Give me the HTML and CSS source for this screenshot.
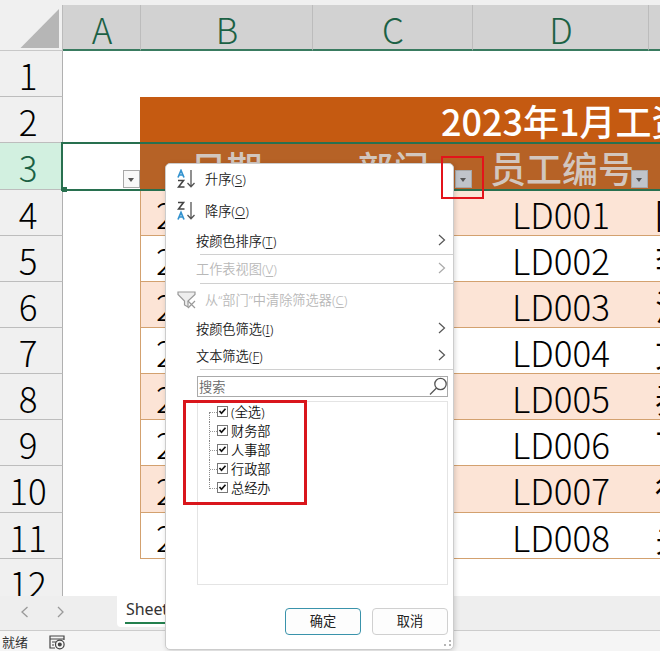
FILE: index.html
```html
<!DOCTYPE html>
<html lang="zh-CN">
<head>
<meta charset="utf-8">
<title>工资表</title>
<link rel="stylesheet" href="styles.css">
</head>
<body>
<div class="app">
  <div class="sheet">
    <div class="cols">
      <div class="corner"><svg width="62" height="46" viewBox="0 0 62 46"><path d="M59 4V43H20.500Z" fill="#b6b6b6"/></svg></div>
      <div class="col">A</div><div class="col">B</div><div class="col">C</div><div class="col">D</div><div class="col"></div>
    </div>
    <div class="row"><div class="num">1</div></div>
    <div class="row title"><div class="num">2</div><div class="blank"></div><div class="banner">2023年1月工资</div></div>
    <div class="row tall heads"><div class="num">3</div><div class="blank"><span class="drop light"></span></div><div class="head">日期</div><div class="head">部门<span class="drop"></span></div><div class="head staff">员工编号<span class="drop"></span></div><div class="head"></div></div>
    <div class="row data"><div class="num">4</div><div class="blank"></div><div class="cell date">2023</div><div class="cell"></div><div class="cell id">LD001</div><div class="cell name">陈</div></div>
    <div class="row data"><div class="num">5</div><div class="blank"></div><div class="cell date">2023</div><div class="cell"></div><div class="cell id">LD002</div><div class="cell name">李</div></div>
    <div class="row data"><div class="num">6</div><div class="blank"></div><div class="cell date">2023</div><div class="cell"></div><div class="cell id">LD003</div><div class="cell name">沈</div></div>
    <div class="row data"><div class="num">7</div><div class="blank"></div><div class="cell date">2023</div><div class="cell"></div><div class="cell id">LD004</div><div class="cell name">文</div></div>
    <div class="row data"><div class="num">8</div><div class="blank"></div><div class="cell date">2023</div><div class="cell"></div><div class="cell id">LD005</div><div class="cell name">秦</div></div>
    <div class="row data"><div class="num">9</div><div class="blank"></div><div class="cell date">2023</div><div class="cell"></div><div class="cell id">LD006</div><div class="cell name">丁</div></div>
    <div class="row tall data"><div class="num">10</div><div class="blank"></div><div class="cell date">2023</div><div class="cell"></div><div class="cell id">LD007</div><div class="cell name">徐</div></div>
    <div class="row data"><div class="num">11</div><div class="blank"></div><div class="cell date">2023</div><div class="cell"></div><div class="cell id">LD008</div><div class="cell name">关</div></div>
    <div class="row"><div class="num">12</div></div>
    <div class="selection"></div>
  </div>
  <div class="tabs">
    <svg class="nav" width="117" height="35" viewBox="0 0 117 35"><path d="M27.500 11 22 16 27.500 21M58 11 63 16 58 21" fill="none" stroke="#999" stroke-width="1.300"/></svg>
    <div class="tab"><span>Sheet1</span></div>
  </div>
  <div class="status">就绪
    <svg width="17" height="15" viewBox="0 0 17 15" fill="none" stroke="#444" stroke-width="1.200"><path d="M6 13H1V1H15V5M1 4H15M3 7H7M3 10H5"/><circle cx="10.800" cy="9.500" r="4.300"/><circle cx="10.800" cy="9.500" r="1.400" fill="#444"/></svg>
  </div>
</div>

<div class="menu">
  <div class="item sort"><svg width="20" height="20" viewBox="0 0 20 20" fill="none"><path d="M1 8.500 4 1.500 7 8.500M2 6H6" stroke="#3292cf" stroke-width="1.700"/><path d="M1 11.500H6.500L1.500 18H7.500" stroke="#444" stroke-width="1.600"/><path d="M14 1V17.500M10.500 14 14 17.800 17.500 14" stroke="#555" stroke-width="1.300"/></svg><span>升序(<u>S</u>)</span></div>
  <div class="item sort desc"><svg width="20" height="20" viewBox="0 0 20 20" fill="none"><path d="M1 1.500H6.500L1.500 8H7.500" stroke="#444" stroke-width="1.600"/><path d="M1 18.500 4 11.500 7 18.500M2 16H6" stroke="#3292cf" stroke-width="1.700"/><path d="M14 1V17.500M10.500 14 14 17.800 17.500 14" stroke="#555" stroke-width="1.300"/></svg><span>降序(<u>O</u>)</span></div>
  <div class="item plain bycolor"><span>按颜色排序(<u>T</u>)</span><svg class="chev" width="8" height="12" viewBox="0 0 8 12"><path d="M1 1 6.500 6 1 11"/></svg></div>
  <div class="rule"></div>
  <div class="item plain view off"><span>工作表视图(<u>V</u>)</span><svg class="chev" width="8" height="12" viewBox="0 0 8 12"><path d="M1 1 6.500 6 1 11"/></svg></div>
  <div class="rule"></div>
  <div class="item sort clear off"><svg width="20" height="20" viewBox="0 0 20 20" fill="none" stroke="#999" stroke-width="1.200"><path d="M1 2H18V4.500L11 11V17L7.500 15V11L1 4.500Z" fill="#eee"/><path d="M11 11 18 18M18 11 11 18"/></svg><span>从“部门”中清除筛选器(<u>C</u>)</span></div>
  <div class="item plain color"><span>按颜色筛选(<u>I</u>)</span><svg class="chev" width="8" height="12" viewBox="0 0 8 12"><path d="M1 1 6.500 6 1 11"/></svg></div>
  <div class="item plain text"><span>文本筛选(<u>F</u>)</span><svg class="chev" width="8" height="12" viewBox="0 0 8 12"><path d="M1 1 6.500 6 1 11"/></svg></div>
  <div class="rule"></div>
  <div class="search">搜索<svg width="19" height="19" viewBox="0 0 19 19" fill="none" stroke="#555" stroke-width="1.300"><circle cx="12.500" cy="7" r="5.700"/><path d="M8.500 11 2 17.500"/></svg></div>
  <div class="list">
    <div class="check"><i></i><svg width="11" height="11" viewBox="0 0 11 11"><path d="M2.500 5 4.500 7.300 8.500 2.800"/></svg>(全选)</div>
    <div class="check"><i></i><svg width="11" height="11" viewBox="0 0 11 11"><path d="M2.500 5 4.500 7.300 8.500 2.800"/></svg>财务部</div>
    <div class="check"><i></i><svg width="11" height="11" viewBox="0 0 11 11"><path d="M2.500 5 4.500 7.300 8.500 2.800"/></svg>人事部</div>
    <div class="check"><i></i><svg width="11" height="11" viewBox="0 0 11 11"><path d="M2.500 5 4.500 7.300 8.500 2.800"/></svg>行政部</div>
    <div class="check last"><i></i><svg width="11" height="11" viewBox="0 0 11 11"><path d="M2.500 5 4.500 7.300 8.500 2.800"/></svg>总经办</div>
  </div>
  <div class="buttons"><div class="btn ok">确定</div><div class="btn">取消</div></div>
  <svg class="grip" width="8" height="8" viewBox="0 0 8 8" fill="#b5b5b5"><path d="M5 0h2v2H5zM5 4h2v2H5zM0 4h2v2H0z"/></svg>
</div>
<div class="mark mark-drop"></div>
<div class="mark mark-list"></div>
</body>
</html>
```

FILE: styles.css
```css
* { box-sizing: border-box; }
body { margin: 0; font-family: "Noto Sans CJK SC", sans-serif; }
.app { position: relative; width: 660px; height: 651px; overflow: hidden; background: #fff; display: flex; flex-direction: column; }
.sheet { position: relative; height: 596px; flex: none; overflow: hidden; padding-top: 5px; background: linear-gradient(#f0f0f0 5px, #fff 5px); }
.cols, .row { display: grid; grid-template-columns: 63px 78px 172px 160px 176px 60px; grid-template-rows: 100%; }
.cols { height: 46px; }
.corner { background: #f0f0f0; border-right: 1px solid #bbb; border-bottom: 1px solid #c8c8c8; }
.corner svg { display: block; }
.col { background: #d2d2d2; color: #1b6144; font-size: 35px; font-weight: 300; line-height: 47px; text-align: center; border-right: 1px solid #bcbcbc; border-bottom: 2px solid #397b60; padding-left: 1px; }
.row { height: 46px; }
.row.tall { height: 47px; }
.row > div { line-height: 47px; font-size: 35px; font-weight: 300; white-space: nowrap; color: #000; }
.row .num { background: #f0f0f0; border-right: 1px solid #b0b0b0; border-bottom: 1px solid #bdbdbd; text-align: center; padding-right: 6px; }
.row .banner { grid-column: 3 / -1; margin-left: -1px; background: #c55a11; color: #fff; font-weight: 500; font-size: 36px; line-height: 46px; padding-left: 301px; }
.row.heads .num { background: #d2f0e0; color: #1b6144; }
.heads .blank, .heads .head { position: relative; }
.row .head { background: #b66226; color: #d2c6be; font-weight: 500; font-size: 36px; text-align: center; line-height: 49px; }
.heads .head:nth-child(3) { margin-left: -1px; }
.row .staff { padding-left: 2px; }
.drop { position: absolute; right: 1px; bottom: 2px; width: 17px; height: 18px; background: #c0c4ca; border: 1px solid #a8a8a8; }
.light { background: #f8f8f8; }
.drop::after { content: ""; position: absolute; left: 4px; top: 7px; border: 3.500px solid transparent; border-top: 4px solid #555; border-bottom: 0; }
.row .cell { border-bottom: 1px solid #d3a16f; }
.data:nth-child(odd) .cell { background: #fce4d6; }
.row .date { margin-left: -1px; border-left: 1px solid #d3a16f; padding-left: 15px; }
.row .id { text-align: center; }
.row .name { padding-left: 6px; font-weight: 350; }
.selection { position: absolute; left: 61px; top: 142px; width: 620px; height: 49px; border: 2px solid #28704f; }
.selection::after { content: ""; position: absolute; left: -1px; bottom: -3px; width: 5px; height: 5px; background: #28704f; }
.tabs { height: 35px; flex: none; display: flex; background: #eee; border-bottom: 1px solid #ccc; }
.nav { flex: none; }
.tab { width: 58px; height: 31px; background: #fff; padding: 0 8px; border-radius: 0 0 4px 4px; font: 16px/27px "Noto Sans", sans-serif; color: #333; }
.tab span { display: block; width: 60px; height: 28px; border-bottom: 2px solid #23804e; padding-left: 1px; letter-spacing: -.1px; }
.status { flex: 1; display: flex; align-items: center; gap: 21px; padding: 2px 0 0 2px; background: #f5f5f5; font-size: 13px; line-height: 18px; color: #333; }

.menu { position: absolute; left: 165px; top: 163px; width: 289px; height: 487px; display: flex; flex-direction: column; background: #fff; border: 1px solid #ccc; border-radius: 5px; box-shadow: 1px 1px 5px rgba(0,0,0,.16); font-family: "Noto Sans", "Noto Sans CJK SC", sans-serif; font-size: 13.200px; font-weight: 350; color: #222; }
.item { display: flex; align-items: center; flex: none; white-space: pre; line-height: 20px; }
.item u { text-underline-offset: 2px; }
.sort { height: 30px; padding-left: 11px; gap: 8px; }
.sort.desc { height: 33px; }
.plain { padding-left: 30px; padding-right: 7px; }
.bycolor { height: 27px; }
.view { height: 28px; }
.sort.clear { height: 31px; }
.color { height: 28px; }
.text { height: 26px; }
.off { color: #b8b8b8; }
.chev { margin-left: auto; fill: none; stroke: #555; stroke-width: 1.200; position: relative; top: -1px; }
.off .chev { stroke: #aaa; }
.rule { height: 1px; flex: none; margin-left: 34px; background: #d0d0d0; }
.search { margin: 6px 5px 0 31px; height: 21px; flex: none; border: 1px solid #aaa; padding-left: 1px; display: flex; justify-content: space-between; align-items: center; color: #666; line-height: 18px; }
.list { margin: 4px 5px 0 31px; height: 184px; flex: none; border: 1px solid #e4e4e4; padding: 1px 0 0 11px; }
.check { position: relative; height: 19px; display: flex; align-items: center; line-height: 19px; white-space: nowrap; color: #111; }
.check i { width: 8px; height: 19px; border-left: 1px dotted #888; background: repeating-linear-gradient(90deg, #999 0 1px, transparent 1px 2px) 0 9px / 8px 1px no-repeat; }
.check.last i { height: 10px; align-self: flex-start; }
.check:first-child i { height: 10px; align-self: flex-end; background-position: 0 0; }
.check svg { margin-right: 3px; outline: 1px solid #777; outline-offset: -1px; position: relative; top: -1px; }
.check path { fill: none; stroke: #111; stroke-width: 1.700; }
.buttons { display: flex; gap: 11px; margin: 23px 0 0 119px; }
.btn { width: 76px; height: 27px; border: 1px solid #d0d0d0; border-radius: 4px; background: #fdfdfd; text-align: center; line-height: 25px; font-weight: 400; }
.ok { border-color: #3a93ab; }
.grip { position: absolute; right: 1px; bottom: 1px; }
.mark { position: absolute; border: 2px solid #e3131b; }
.mark-drop { left: 441px; top: 156px; width: 43px; height: 43px; }
.mark-list { left: 183px; top: 400px; width: 124px; height: 105px; border-width: 3px; border-color: #d9161c; }
```
